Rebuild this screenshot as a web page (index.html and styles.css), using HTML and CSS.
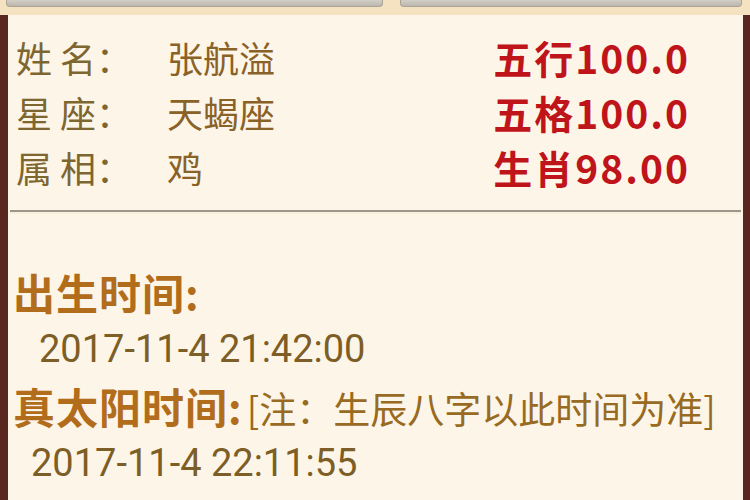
FILE: index.html
```html
<!DOCTYPE html>
<html lang="zh">
<head>
<meta charset="utf-8">
<link rel="stylesheet" href="styles.css">
</head>
<body>
<div class="topbar">
  <div class="btn btn-left"></div>
  <div class="btn btn-right"></div>
</div>
<div class="panel">
  <div class="info">
    <div class="labels">
      <div class="row"><span class="lbl">姓 名：</span><span class="val">张航溢</span></div>
      <div class="row"><span class="lbl">星 座：</span><span class="val">天蝎座</span></div>
      <div class="row"><span class="lbl">属 相：</span><span class="val">鸡</span></div>
    </div>
    <div class="scores">
      <div class="score">五行100.0</div>
      <div class="score">五格100.0</div>
      <div class="score">生肖98.00</div>
    </div>
  </div>
  <div class="sep"></div>
  <div class="times">
    <div class="head">出生时间:</div>
    <div class="date d1">2017-11-4 21:42:00</div>
    <div class="head">真太阳时间:<span class="note">[注：生辰八字以此时间为准]</span></div>
    <div class="date d2">2017-11-4 22:11:55</div>
  </div>
</div>
</body>
</html>
```
FILE: styles.css
```css
html, body {
  margin: 0;
  padding: 0;
  height: 100%;
  overflow: hidden;
}
body {
  background: #f4e2c0;
  font-family: Roboto, "Noto Sans CJK SC", sans-serif;
}
.topbar {
  height: 15px;
  display: flex;
  gap: 17px;
  padding: 0 8px 0 6px;
  box-sizing: border-box;
}
.btn {
  height: 7px;
  background: linear-gradient(#d2cec6, #bdb8ae);
  border: 1px solid #a9a396;
  border-top: none;
  border-radius: 0 0 4px 4px;
  box-sizing: border-box;
}
.btn-left { width: 377px; }
.btn-right { flex: 1; }
.panel {
  background: #fdf6e8;
  border-left: 8px solid #5a2620;
  border-right: 7px solid #5a2620;
  height: 485px;
  box-sizing: border-box;
  padding-top: 15px;
}
.info {
  display: flex;
  justify-content: space-between;
  padding: 0 53px 0 8px;
}
.row {
  height: 55px;
  line-height: 55px;
  font-size: 36px;
  display: flex;
}
.lbl {
  color: #7d6630;
  width: 151px;
  font-family: "Noto Sans CJK SC", sans-serif;
}
.val {
  color: #8a6228;
  font-family: "Noto Sans CJK SC", sans-serif;
}
.score {
  height: 55px;
  line-height: 55px;
  font-size: 39px;
  font-weight: bold;
  color: #c0141b;
  letter-spacing: 2px;
  font-family: "Noto Sans CJK SC", sans-serif;
}
.sep {
  margin: 15px 2px 0 2px;
  height: 2px;
  background: #9c978a;
  border-bottom: 2px solid #f7eedc;
}
.times {
  padding: 50px 0 0 5px;
}
.head {
  height: 56px;
  line-height: 56px;
  font-size: 42px;
  font-weight: bold;
  color: #b26d1c;
  font-family: "Noto Sans CJK SC", sans-serif;
  white-space: nowrap;
  letter-spacing: 1px;
}
.note {
  font-weight: normal;
  font-size: 37px;
  color: #986a22;
  margin-left: 4px;
  letter-spacing: 0;
}
.date {
  height: 58px;
  line-height: 58px;
  font-size: 38px;
  color: #7d5e26;
  letter-spacing: 0;
}
.d1 { padding-left: 26px; }
.d2 { padding-left: 18px; }
```
